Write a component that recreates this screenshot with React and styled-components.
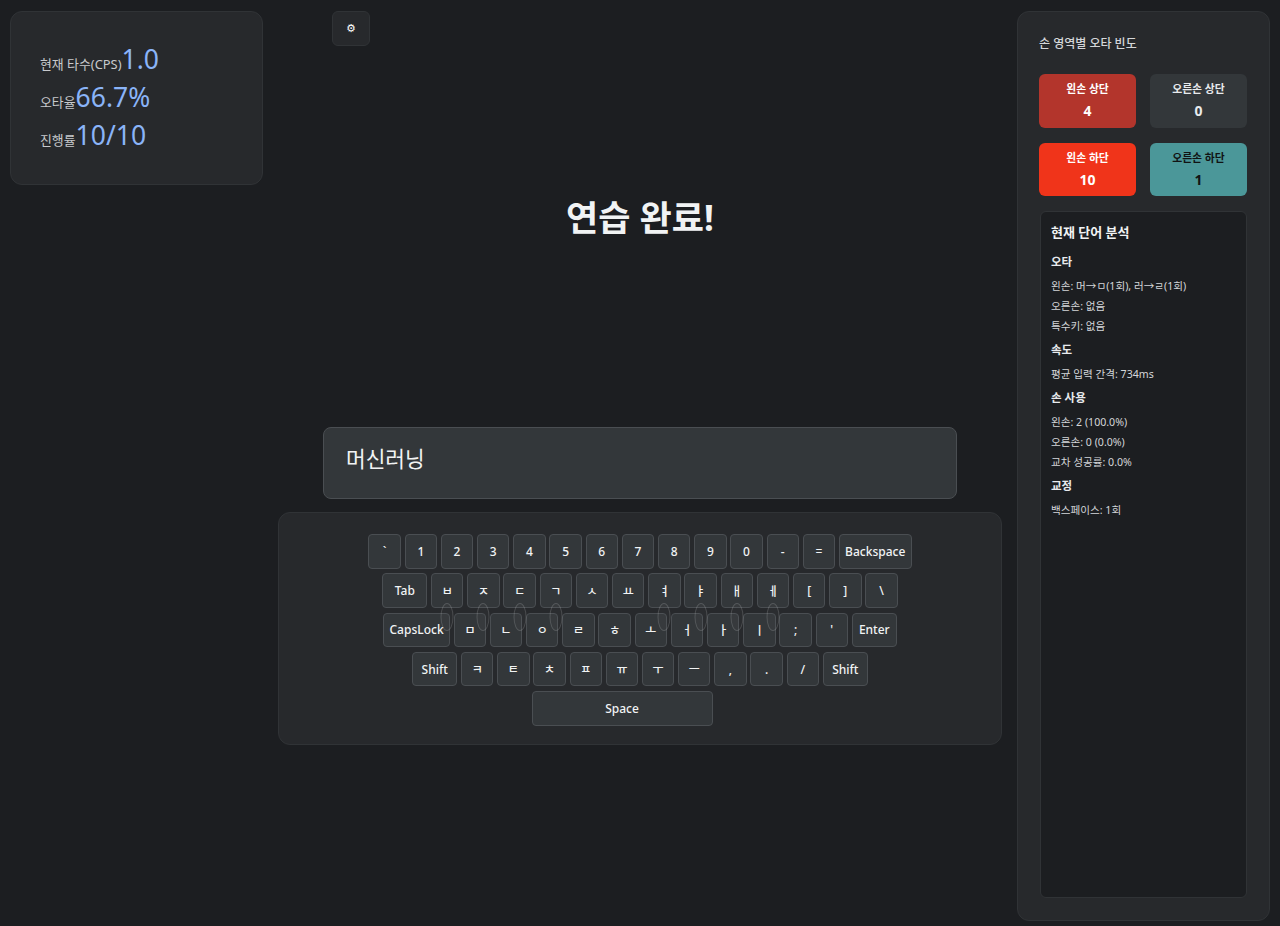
import React from 'react';
import styled, { createGlobalStyle } from 'styled-components';

const GlobalStyle = createGlobalStyle`
    html, body {
        margin: 0;
        padding: 0;
        background-color: #1c1e21;
    }

    * {
        box-sizing: border-box;
    }

    body {
        font-family: "Noto Sans", "Noto Sans CJK KR", sans-serif;
        color: #e8eaed;
    }
`;

const Page = styled.div`
    display: flex;
    height: 926px;
    padding: 11px 10px 5px;
    overflow: hidden;
`;

const Panel = styled.div`
    width: 253px;
    flex-shrink: 0;
    background-color: #27292c;
    border: 1px solid #303336;
    border-radius: 12px;
`;

const StatsPanel = styled(Panel)`
    height: 174px;
    padding: 28px 29px;
`;

const StatLine = styled.div`
    display: flex;
    align-items: baseline;
    height: 38px;
    line-height: 38px;
    font-size: 12.9px;
    color: #c8cacd;
`;

const StatValue = styled.span`
    font-size: 26.5px;
    color: #8ab4f8;
`;

const Center = styled.div`
    flex: 1;
    display: flex;
    flex-direction: column;
    align-items: center;
    padding: 0 15px;
`;

const SettingsButton = styled.button`
    align-self: flex-start;
    width: 38px;
    height: 35px;
    margin-left: 54px;
    padding: 0;
    background-color: #27292c;
    border: 1px solid #303336;
    border-radius: 6px;
    color: #ffffff;
    font-family: "DejaVu Sans", sans-serif;
    font-size: 11px;
`;

const Title = styled.h1`
    margin: 145px 0 0;
    height: 54px;
    line-height: 54px;
    font-size: 35px;
    font-weight: 700;
    color: #f1f3f4;
    text-align: center;
`;

const InputBox = styled.div`
    width: 634px;
    height: 72px;
    margin: 182px 0 13px;
    padding: 15px 22px;
    background-color: #33373a;
    border: 1px solid #4a4e52;
    border-radius: 8px;
    font-size: 21.4px;
    line-height: 32px;
    color: #f1f3f4;
`;

const Keyboard = styled.div`
    width: 724px;
    height: 233px;
    padding: 21px 0 0;
    background-color: #27292c;
    border: 1px solid #303336;
    border-radius: 12px;
    display: flex;
    flex-direction: column;
    gap: 4.8px;
`;

const KeyRow = styled.div`
    display: flex;
    justify-content: center;
    gap: 3.8px;
    padding-right: ${(p) => p.$shift || 0}px;
`;

const Key = styled.div`
    position: relative;
    width: ${(p) => p.$width || 32.4}px;
    height: 34.5px;
    display: flex;
    align-items: center;
    justify-content: center;
    background-color: #33373a;
    border: 1px solid #4a4e52;
    border-radius: 4px;
    font-size: 12px;
    font-weight: 500;
    color: #f1f3f4;
    white-space: nowrap;
`;

const FingerMark = styled.span`
    position: absolute;
    top: 28px;
    left: 50%;
    width: 13px;
    height: 28px;
    margin-top: 1px;
    transform: translateX(-50%);
    border: 1px solid rgba(255, 255, 255, 0.15);
    border-radius: 50%;
    background-color: rgba(255, 255, 255, 0.02);
    z-index: 2;
`;

const SidePanel = styled(Panel)`
    height: 910px;
    padding: 23px 22px 22px 21px;
    display: flex;
    flex-direction: column;
`;

const SideTitle = styled.h2`
    margin: 0 0 21px;
    height: 18px;
    line-height: 18px;
    font-size: 12px;
    font-weight: 500;
    color: #d4d6d9;
`;

const ZoneGrid = styled.div`
    display: grid;
    grid-template-columns: 97px 97px;
    column-gap: 14px;
    row-gap: 15px;
    margin-bottom: 15px;
`;

const ZoneCard = styled.div`
    height: 53.7px;
    padding-top: 7px;
    border-radius: 6px;
    background-color: ${(p) => p.$bg};
    color: ${(p) => p.$fg};
    text-align: center;
`;

const ZoneLabel = styled.div`
    font-size: 10.8px;
    font-weight: 700;
    line-height: 16px;
`;

const ZoneCount = styled.div`
    margin-top: 4px;
    font-size: 14px;
    font-weight: 700;
    line-height: 20px;
`;

const AnalysisBox = styled.div`
    flex: 1;
    margin-left: 1px;
    padding: 10px 10px;
    background-color: #1c1e21;
    border: 1px solid #303336;
    border-radius: 6px;
`;

const AnalysisTitle = styled.h3`
    margin: 0 0 10px;
    height: 20px;
    line-height: 20px;
    font-size: 13px;
    font-weight: 700;
    color: #f1f3f4;
`;

const Section = styled.div`
    margin-bottom: 4px;
`;

const SectionTitle = styled.h4`
    margin: 0 0 4px;
    height: 20px;
    line-height: 20px;
    font-size: 11.5px;
    font-weight: 700;
    color: #e8eaed;
`;

const InfoLine = styled.div`
    height: 20px;
    line-height: 20px;
    font-size: 10.6px;
    color: #d4d6d9;
`;

const rows = [
    ['`', '1', '2', '3', '4', '5', '6', '7', '8', '9', '0', '-', '=', 'Backspace'],
    ['Tab', 'ㅂ', 'ㅈ', 'ㄷ', 'ㄱ', 'ㅅ', 'ㅛ', 'ㅕ', 'ㅑ', 'ㅐ', 'ㅔ', '[', ']', '\\'],
    ['CapsLock', 'ㅁ', 'ㄴ', 'ㅇ', 'ㄹ', 'ㅎ', 'ㅗ', 'ㅓ', 'ㅏ', 'ㅣ', ';', "'", 'Enter'],
    ['Shift', 'ㅋ', 'ㅌ', 'ㅊ', 'ㅍ', 'ㅠ', 'ㅜ', 'ㅡ', ',', '.', '/', 'Shift'],
    ['Space'],
];

const keyWidths = { Backspace: 72.7, Tab: 45, CapsLock: 66.7, Enter: 45, Shift: 45, Space: 181 };
const fingerKeys = ['ㅂ', 'ㅈ', 'ㄷ', 'ㄱ', 'ㅕ', 'ㅑ', 'ㅐ', 'ㅔ'];

const zones = [
    { label: '왼손 상단', count: 4, bg: '#b3352c', fg: '#ffffff' },
    { label: '오른손 상단', count: 0, bg: '#33373a', fg: '#e8eaed' },
    { label: '왼손 하단', count: 10, bg: '#f0341a', fg: '#ffffff' },
    { label: '오른손 하단', count: 1, bg: '#4b9799', fg: '#111314' },
];

const analysis = [
    { title: '오타', lines: ['왼손: 머→ㅁ(1회), 러→ㄹ(1회)', '오른손: 없음', '특수키: 없음'] },
    { title: '속도', lines: ['평균 입력 간격: 734ms'] },
    { title: '손 사용', lines: ['왼손: 2 (100.0%)', '오른손: 0 (0.0%)', '교차 성공률: 0.0%'] },
    { title: '교정', lines: ['백스페이스: 1회'] },
];

const App = () => {
    return (
        <Page>
            <GlobalStyle />
            <StatsPanel>
                <StatLine>현재 타수(CPS)<StatValue>1.0</StatValue></StatLine>
                <StatLine>오타율<StatValue>66.7%</StatValue></StatLine>
                <StatLine>진행률<StatValue>10/10</StatValue></StatLine>
            </StatsPanel>

            <Center>
                <SettingsButton>⚙</SettingsButton>
                <Title>연습 완료!</Title>
                <InputBox>머신러닝</InputBox>
                <Keyboard>
                    {rows.map((row, i) => (
                        <KeyRow key={i} $shift={row[0] === 'Space' ? 36 : 0}>
                            {row.map((k, j) => (
                                <Key key={j} $width={keyWidths[k]}>
                                    {k}
                                    {fingerKeys.includes(k) && <FingerMark />}
                                </Key>
                            ))}
                        </KeyRow>
                    ))}
                </Keyboard>
            </Center>

            <SidePanel>
                <SideTitle>손 영역별 오타 빈도</SideTitle>
                <ZoneGrid>
                    {zones.map((z) => (
                        <ZoneCard key={z.label} $bg={z.bg} $fg={z.fg}>
                            <ZoneLabel>{z.label}</ZoneLabel>
                            <ZoneCount>{z.count}</ZoneCount>
                        </ZoneCard>
                    ))}
                </ZoneGrid>
                <AnalysisBox>
                    <AnalysisTitle>현재 단어 분석</AnalysisTitle>
                    {analysis.map((s) => (
                        <Section key={s.title}>
                            <SectionTitle>{s.title}</SectionTitle>
                            {s.lines.map((l) => (
                                <InfoLine key={l}>{l}</InfoLine>
                            ))}
                        </Section>
                    ))}
                </AnalysisBox>
            </SidePanel>
        </Page>
    );
};

export default App;
